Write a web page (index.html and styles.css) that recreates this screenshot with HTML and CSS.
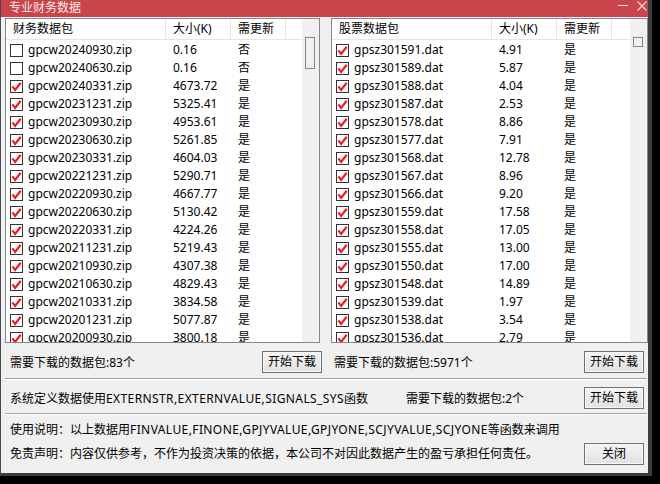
FILE: index.html
```html
<!DOCTYPE html>
<html lang="zh-CN">
<head>
<meta charset="utf-8">
<title>专业财务数据</title>
<link rel="stylesheet" href="styles.css">
</head>
<body>
<div class="window">
  <div class="titlebar">
    <span class="title">专业财务数据</span>
    <div class="controls">
      <svg class="ctl" viewBox="0 0 10 10" width="10" height="10"><path d="M0 4.5H10"/></svg>
      <svg class="ctl" viewBox="0 0 10 10" width="10" height="10"><path d="M0.5 0.5L9.5 9.5M9.5 0.5L0.5 9.5"/></svg>
    </div>
  </div>
  <div class="body">
    <div class="lists">
      <div class="listbox left">
        <div class="lv">
          <div class="lv-head"><div class="col1">财务数据包</div><div class="col2">大小(K)</div><div class="col3">需更新</div><div class="fill"></div></div>
          <div class="lv-rows">
            <div class="row"><div class="col1"><span class="cb"></span>gpcw20240930.zip</div><div class="col2">0.16</div><div class="col3">否</div></div>
            <div class="row"><div class="col1"><span class="cb"></span>gpcw20240630.zip</div><div class="col2">0.16</div><div class="col3">否</div></div>
            <div class="row"><div class="col1"><span class="cb"><svg viewBox="0 0 11 11"><path d="M1.4 5.4 4.1 8.9 9.7 1.7"/></svg></span>gpcw20240331.zip</div><div class="col2">4673.72</div><div class="col3">是</div></div>
            <div class="row"><div class="col1"><span class="cb"><svg viewBox="0 0 11 11"><path d="M1.4 5.4 4.1 8.9 9.7 1.7"/></svg></span>gpcw20231231.zip</div><div class="col2">5325.41</div><div class="col3">是</div></div>
            <div class="row"><div class="col1"><span class="cb"><svg viewBox="0 0 11 11"><path d="M1.4 5.4 4.1 8.9 9.7 1.7"/></svg></span>gpcw20230930.zip</div><div class="col2">4953.61</div><div class="col3">是</div></div>
            <div class="row"><div class="col1"><span class="cb"><svg viewBox="0 0 11 11"><path d="M1.4 5.4 4.1 8.9 9.7 1.7"/></svg></span>gpcw20230630.zip</div><div class="col2">5261.85</div><div class="col3">是</div></div>
            <div class="row"><div class="col1"><span class="cb"><svg viewBox="0 0 11 11"><path d="M1.4 5.4 4.1 8.9 9.7 1.7"/></svg></span>gpcw20230331.zip</div><div class="col2">4604.03</div><div class="col3">是</div></div>
            <div class="row"><div class="col1"><span class="cb"><svg viewBox="0 0 11 11"><path d="M1.4 5.4 4.1 8.9 9.7 1.7"/></svg></span>gpcw20221231.zip</div><div class="col2">5290.71</div><div class="col3">是</div></div>
            <div class="row"><div class="col1"><span class="cb"><svg viewBox="0 0 11 11"><path d="M1.4 5.4 4.1 8.9 9.7 1.7"/></svg></span>gpcw20220930.zip</div><div class="col2">4667.77</div><div class="col3">是</div></div>
            <div class="row"><div class="col1"><span class="cb"><svg viewBox="0 0 11 11"><path d="M1.4 5.4 4.1 8.9 9.7 1.7"/></svg></span>gpcw20220630.zip</div><div class="col2">5130.42</div><div class="col3">是</div></div>
            <div class="row"><div class="col1"><span class="cb"><svg viewBox="0 0 11 11"><path d="M1.4 5.4 4.1 8.9 9.7 1.7"/></svg></span>gpcw20220331.zip</div><div class="col2">4224.26</div><div class="col3">是</div></div>
            <div class="row"><div class="col1"><span class="cb"><svg viewBox="0 0 11 11"><path d="M1.4 5.4 4.1 8.9 9.7 1.7"/></svg></span>gpcw20211231.zip</div><div class="col2">5219.43</div><div class="col3">是</div></div>
            <div class="row"><div class="col1"><span class="cb"><svg viewBox="0 0 11 11"><path d="M1.4 5.4 4.1 8.9 9.7 1.7"/></svg></span>gpcw20210930.zip</div><div class="col2">4307.38</div><div class="col3">是</div></div>
            <div class="row"><div class="col1"><span class="cb"><svg viewBox="0 0 11 11"><path d="M1.4 5.4 4.1 8.9 9.7 1.7"/></svg></span>gpcw20210630.zip</div><div class="col2">4829.43</div><div class="col3">是</div></div>
            <div class="row"><div class="col1"><span class="cb"><svg viewBox="0 0 11 11"><path d="M1.4 5.4 4.1 8.9 9.7 1.7"/></svg></span>gpcw20210331.zip</div><div class="col2">3834.58</div><div class="col3">是</div></div>
            <div class="row"><div class="col1"><span class="cb"><svg viewBox="0 0 11 11"><path d="M1.4 5.4 4.1 8.9 9.7 1.7"/></svg></span>gpcw20201231.zip</div><div class="col2">5077.87</div><div class="col3">是</div></div>
            <div class="row"><div class="col1"><span class="cb"><svg viewBox="0 0 11 11"><path d="M1.4 5.4 4.1 8.9 9.7 1.7"/></svg></span>gpcw20200930.zip</div><div class="col2">3800.18</div><div class="col3">是</div></div>
          </div>
        </div>
        <div class="vscroll"><div class="thumb"></div></div>
      </div>
      <div class="listbox right">
        <div class="lv">
          <div class="lv-head"><div class="col1">股票数据包</div><div class="col2">大小(K)</div><div class="col3">需更新</div><div class="fill"></div></div>
          <div class="lv-rows">
            <div class="row"><div class="col1"><span class="cb"><svg viewBox="0 0 11 11"><path d="M1.4 5.4 4.1 8.9 9.7 1.7"/></svg></span>gpsz301591.dat</div><div class="col2">4.91</div><div class="col3">是</div></div>
            <div class="row"><div class="col1"><span class="cb"><svg viewBox="0 0 11 11"><path d="M1.4 5.4 4.1 8.9 9.7 1.7"/></svg></span>gpsz301589.dat</div><div class="col2">5.87</div><div class="col3">是</div></div>
            <div class="row"><div class="col1"><span class="cb"><svg viewBox="0 0 11 11"><path d="M1.4 5.4 4.1 8.9 9.7 1.7"/></svg></span>gpsz301588.dat</div><div class="col2">4.04</div><div class="col3">是</div></div>
            <div class="row"><div class="col1"><span class="cb"><svg viewBox="0 0 11 11"><path d="M1.4 5.4 4.1 8.9 9.7 1.7"/></svg></span>gpsz301587.dat</div><div class="col2">2.53</div><div class="col3">是</div></div>
            <div class="row"><div class="col1"><span class="cb"><svg viewBox="0 0 11 11"><path d="M1.4 5.4 4.1 8.9 9.7 1.7"/></svg></span>gpsz301578.dat</div><div class="col2">8.86</div><div class="col3">是</div></div>
            <div class="row"><div class="col1"><span class="cb"><svg viewBox="0 0 11 11"><path d="M1.4 5.4 4.1 8.9 9.7 1.7"/></svg></span>gpsz301577.dat</div><div class="col2">7.91</div><div class="col3">是</div></div>
            <div class="row"><div class="col1"><span class="cb"><svg viewBox="0 0 11 11"><path d="M1.4 5.4 4.1 8.9 9.7 1.7"/></svg></span>gpsz301568.dat</div><div class="col2">12.78</div><div class="col3">是</div></div>
            <div class="row"><div class="col1"><span class="cb"><svg viewBox="0 0 11 11"><path d="M1.4 5.4 4.1 8.9 9.7 1.7"/></svg></span>gpsz301567.dat</div><div class="col2">8.96</div><div class="col3">是</div></div>
            <div class="row"><div class="col1"><span class="cb"><svg viewBox="0 0 11 11"><path d="M1.4 5.4 4.1 8.9 9.7 1.7"/></svg></span>gpsz301566.dat</div><div class="col2">9.20</div><div class="col3">是</div></div>
            <div class="row"><div class="col1"><span class="cb"><svg viewBox="0 0 11 11"><path d="M1.4 5.4 4.1 8.9 9.7 1.7"/></svg></span>gpsz301559.dat</div><div class="col2">17.58</div><div class="col3">是</div></div>
            <div class="row"><div class="col1"><span class="cb"><svg viewBox="0 0 11 11"><path d="M1.4 5.4 4.1 8.9 9.7 1.7"/></svg></span>gpsz301558.dat</div><div class="col2">17.05</div><div class="col3">是</div></div>
            <div class="row"><div class="col1"><span class="cb"><svg viewBox="0 0 11 11"><path d="M1.4 5.4 4.1 8.9 9.7 1.7"/></svg></span>gpsz301555.dat</div><div class="col2">13.00</div><div class="col3">是</div></div>
            <div class="row"><div class="col1"><span class="cb"><svg viewBox="0 0 11 11"><path d="M1.4 5.4 4.1 8.9 9.7 1.7"/></svg></span>gpsz301550.dat</div><div class="col2">17.00</div><div class="col3">是</div></div>
            <div class="row"><div class="col1"><span class="cb"><svg viewBox="0 0 11 11"><path d="M1.4 5.4 4.1 8.9 9.7 1.7"/></svg></span>gpsz301548.dat</div><div class="col2">14.89</div><div class="col3">是</div></div>
            <div class="row"><div class="col1"><span class="cb"><svg viewBox="0 0 11 11"><path d="M1.4 5.4 4.1 8.9 9.7 1.7"/></svg></span>gpsz301539.dat</div><div class="col2">1.97</div><div class="col3">是</div></div>
            <div class="row"><div class="col1"><span class="cb"><svg viewBox="0 0 11 11"><path d="M1.4 5.4 4.1 8.9 9.7 1.7"/></svg></span>gpsz301538.dat</div><div class="col2">3.54</div><div class="col3">是</div></div>
            <div class="row"><div class="col1"><span class="cb"><svg viewBox="0 0 11 11"><path d="M1.4 5.4 4.1 8.9 9.7 1.7"/></svg></span>gpsz301536.dat</div><div class="col2">2.79</div><div class="col3">是</div></div>
          </div>
        </div>
        <div class="vscroll"><div class="thumb small"></div></div>
      </div>
    </div>

    <div class="status">
      <div class="grp l"><span>需要下载的数据包:83个</span><button class="btn">开始下载</button></div>
      <div class="grp r"><span>需要下载的数据包:5971个</span><button class="btn">开始下载</button></div>
    </div>
    <div class="sep"></div>
    <div class="sysrow">
      <span class="sysdesc">系统定义数据使用<span class="lat">EXTERNSTR,EXTERNVALUE,SIGNALS_SYS</span>函数</span>
      <span class="syscount">需要下载的数据包:2个</span>
      <button class="btn">开始下载</button>
    </div>
    <div class="sep"></div>
    <div class="notes">
      <div class="note"><span>使用说明：以上数据用<span class="lat">FINVALUE,FINONE,GPJYVALUE,GPJYONE,SCJYVALUE,SCJYONE</span>等函数来调用</span></div>
      <div class="note"><span>免责声明：内容仅供参考，不作为投资决策的依据，本公司不对因此数据产生的盈亏承担任何责任。</span><button class="btn">关闭</button></div>
    </div>
  </div>
</div>
</body>
</html>
```

FILE: styles.css
```css
html, body {
  margin: 0;
  padding: 0;
  background: #000;
}
body {
  font-family: "Noto Sans", "Noto Sans CJK SC", sans-serif;
  font-size: 12px;
  color: #000;
}
.window {
  width: 652px;
  height: 476px;
  box-sizing: border-box;
  border-left: 1px solid #4a4a4a;
  border-right: 4px solid #3c3c3c;
  border-bottom: 3px solid #3c3c3c;
  background: #f0f0f0;
  display: flex;
  flex-direction: column;
}
.titlebar {
  height: 17px;
  flex: none;
  background: #c9444b;
  color: #fbe9e9;
  display: flex;
  align-items: flex-start;
}
.title {
  padding-left: 8px;
  line-height: 15px;
}
.controls {
  margin-left: auto;
  display: flex;
  gap: 9px;
  padding: 1px 1px 0 0;
}
.ctl {
  display: block;
}
.ctl path {
  fill: none;
  stroke: #f6dcdc;
  stroke-width: 1.1;
}
.body {
  flex: 1;
  padding: 1px 0 0 4px;
  display: flex;
  flex-direction: column;
}
.lists {
  display: flex;
  gap: 11px;
  height: 325px;
  flex: none;
}
.listbox {
  height: 325px;
  box-sizing: border-box;
  border: 1px solid #828790;
  background: #fff;
  display: flex;
}
.listbox.left { width: 315px; }
.listbox.right { width: 317px; }
.lv {
  flex: 1;
  overflow: hidden;
  display: flex;
  flex-direction: column;
}
.lv-head {
  display: flex;
  flex: none;
  height: 21px;
  box-sizing: border-box;
  border-bottom: 1px solid #e5e5e5;
}
.lv-head > div {
  line-height: 20px;
  padding-left: 7px;
  box-sizing: border-box;
  border-right: 1px solid #e5e5e5;
}
.lv-head .fill {
  flex: 1;
  border-right: none;
}
.col1 { width: 160px; flex: none; box-sizing: border-box; }
.col2 { width: 65px; flex: none; box-sizing: border-box; }
.col3 { width: 55px; flex: none; box-sizing: border-box; }
.lv-rows {
  padding-top: 1px;
}
.row {
  display: flex;
  height: 18px;
  line-height: 18px;
  white-space: nowrap;
}
.row .col1 {
  display: flex;
  align-items: center;
  gap: 5px;
  padding-left: 4px;
}
.row .col2, .row .col3 {
  padding-left: 7px;
}
.cb {
  width: 13px;
  height: 13px;
  flex: none;
  box-sizing: border-box;
  border: 1px solid #333;
  background: #fff;
}
.cb svg {
  display: block;
  width: 11px;
  height: 11px;
}
.cb path {
  fill: none;
  stroke: #ec1c24;
  stroke-width: 2.2;
}
.vscroll {
  width: 17px;
  flex: none;
  background: #f0f0f0;
  box-sizing: border-box;
  padding: 18px 0 0 3px;
}
.thumb {
  width: 10px;
  height: 32px;
  box-sizing: border-box;
  border: 1px solid #858585;
  background: #f0f0f0;
}
.thumb.small { height: 10px; }
.status {
  display: flex;
  gap: 9px;
  height: 35px;
  flex: none;
  box-sizing: border-box;
  padding-top: 2px;
  align-items: center;
}
.grp {
  display: flex;
  align-items: center;
  justify-content: space-between;
  box-sizing: border-box;
  width: 317px;
}
.grp.l { padding-left: 5px; }
.grp.r { padding-left: 3px; padding-right: 4px; }
.btn {
  width: 60px;
  height: 22px;
  box-sizing: border-box;
  margin: 0;
  padding: 0;
  border: 1px solid #707070;
  background: linear-gradient(#f4f4f4, #e2e2e2);
  box-shadow: inset 0 0 0 1px #f8f8f8;
  font: inherit;
  line-height: 20px;
  color: #000;
  text-align: center;
}
.sep {
  height: 0;
  flex: none;
  margin-right: 1px;
  border-top: 1px solid #a0a0a0;
  border-bottom: 1px solid #fff;
}
.sysrow {
  display: flex;
  align-items: center;
  height: 33px;
  flex: none;
  box-sizing: border-box;
  padding: 2px 4px 0 5px;
}
.sysdesc { width: 396px; flex: none; white-space: nowrap; }
.syscount { flex: 1; }
.lat { letter-spacing: 0.4px; }
.notes {
  flex: 1;
  padding: 3px 4px 0 5px;
}
.note {
  height: 24px;
  line-height: 24px;
  display: flex;
  align-items: center;
  justify-content: space-between;
  white-space: nowrap;
}
```
